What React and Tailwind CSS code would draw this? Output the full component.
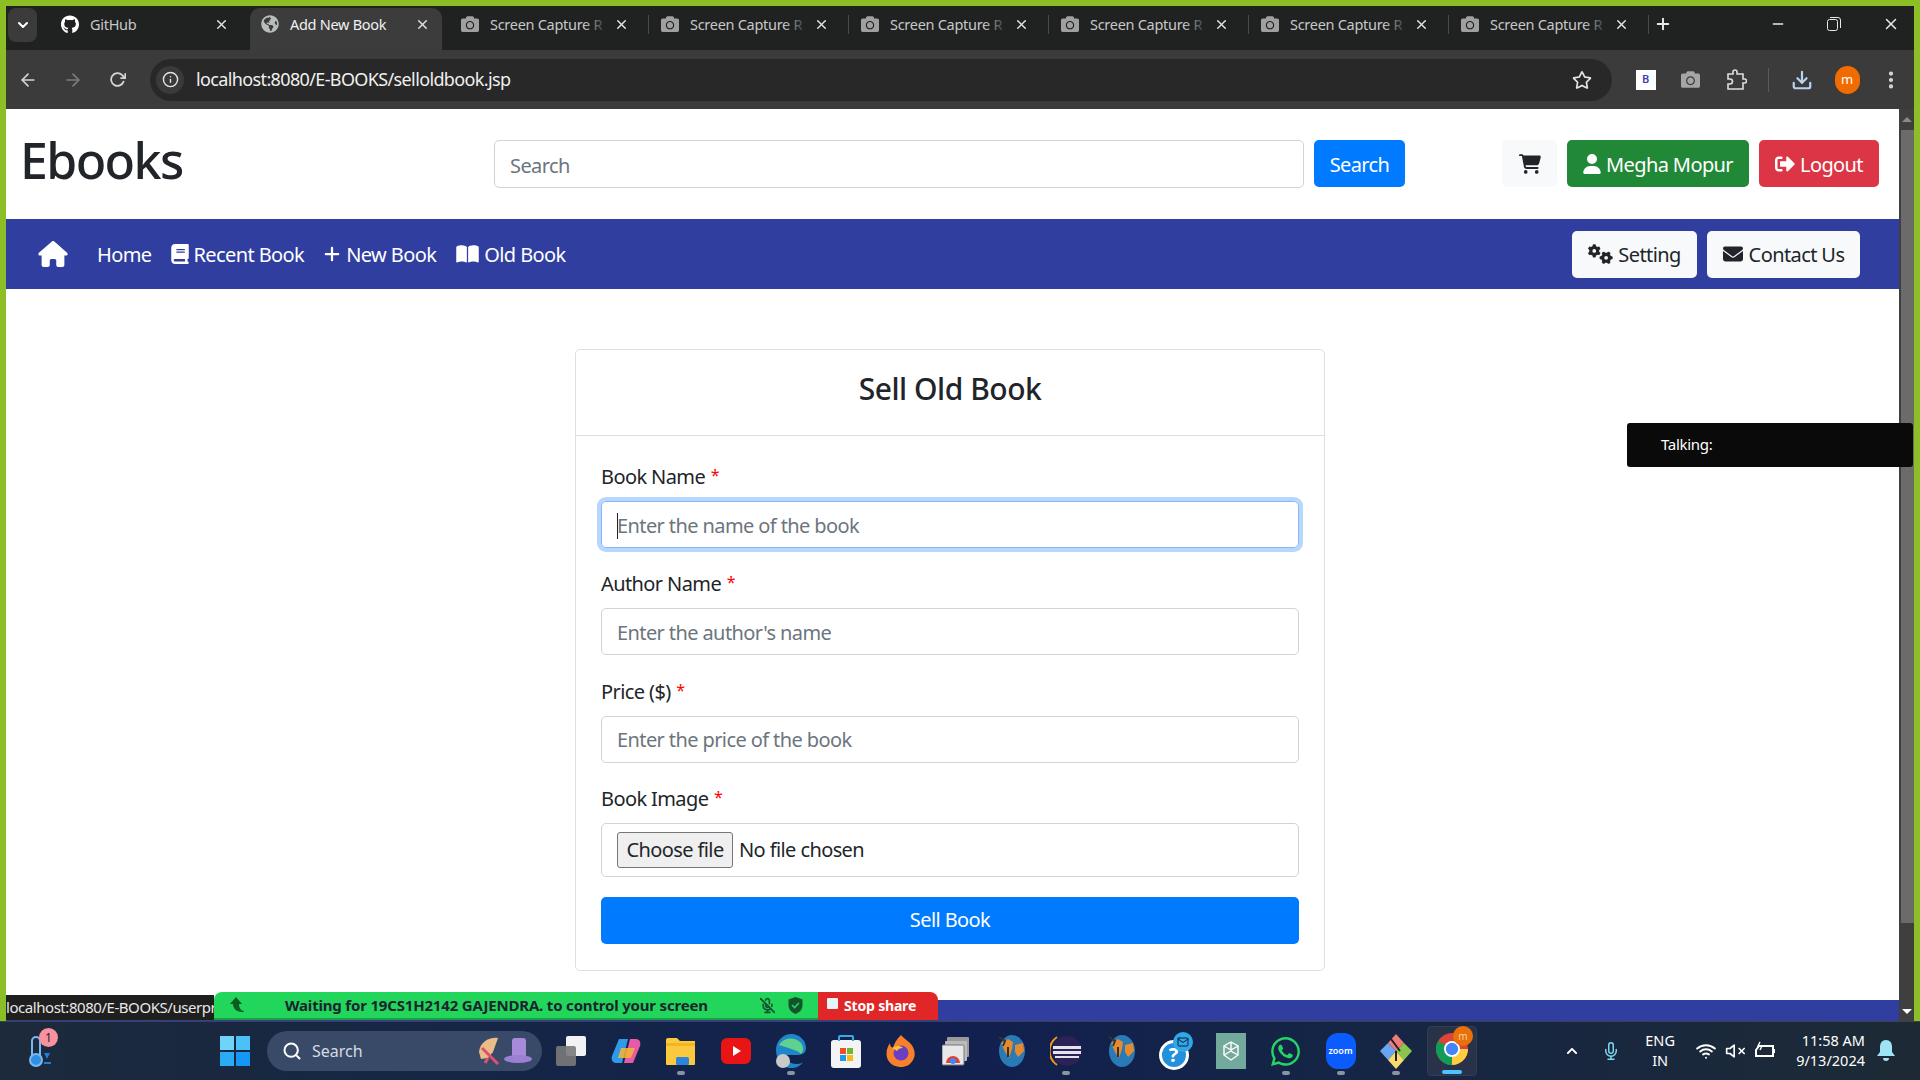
import React from "react";
import { FaSignOutAlt, FaGithub, FaGlobeAmericas, FaCamera, FaRegStar, FaWhatsapp, FaChevronUp } from "react-icons/fa";
import { FaHouse, FaBook, FaPlus, FaBookOpen, FaGears, FaEnvelope, FaCartShopping, FaUser } from "react-icons/fa6";
import { FiArrowLeft, FiArrowRight, FiRotateCw, FiInfo, FiDownload, FiX, FiMinus, FiSearch, FiPlus, FiChevronDown, FiMic, FiMicOff, FiWifi, FiVolumeX, FiMoreVertical, FiMail } from "react-icons/fi";

function Tab({ icon, title, active, sep, fade }) {
  return (
    <div className={active
      ? "relative flex items-center w-[192px] h-[42px] mt-[2px] ml-[1px] mr-[7px] pl-[11px] pr-[12px] pb-[10px] rounded-t-[10px] bg-[#3c3c3c] text-[#f1f1f1]"
      : "relative flex items-center w-[200px] h-[36px] pl-[12px] pr-[20px] text-[#c7c7c7]"}>
      <span className="w-[18px] h-[18px] flex items-center justify-center shrink-0 text-[#b9bcbd]">{icon}</span>
      <span className="relative ml-[11px] flex-1 pt-[1px] text-[14.5px] tracking-[-0.02em] whitespace-nowrap">
        {title}
        {fade && <span className="absolute right-0 top-0 bottom-0 w-[24px] bg-gradient-to-r from-transparent to-[#202221]" />}
      </span>
      <FiX className="ml-[6px] shrink-0 w-[15px] h-[15px] text-[#e0e0e0]" strokeWidth={2.4} />
      {sep && <span className="absolute right-0 top-[9px] h-[19px] w-px bg-[#4a4a4a]" />}
    </div>
  );
}

function Tool({ children, w = "w-[45px]" }) {
  return <div className={`${w} flex items-center justify-center shrink-0`}>{children}</div>;
}

function NavLink({ icon, label, cls }) {
  return (
    <span className={`flex items-center text-white text-[20px] tracking-[-0.03em] ${cls}`}>
      {icon}<span className="pt-[2px]">{label}</span>
    </span>
  );
}

const Star = () => <span className="text-[#ff0000] text-[16px] leading-[0] align-[3px] ml-[1px]">*</span>;

function Field({ label, placeholder, focus, caret }) {
  return (
    <div className="mb-[21.3px]">
      <div className="h-[30px] mb-[9px] text-[20px] leading-[30px] tracking-[-0.03em] text-[#212529]">
        {label} <Star />
      </div>
      <div className={focus
        ? "h-[47px] rounded-[5px] border border-[#86b7fe] shadow-[0_0_0_4px_#b8d7fd] flex items-center pl-[15px] pt-[2px] text-[20px] tracking-[-0.03em] text-[#6c757d]"
        : "h-[47px] rounded-[5px] border border-[#ced4da] flex items-center pl-[15px] pt-[2px] text-[20px] tracking-[-0.03em] text-[#6c757d]"}>
        {caret && <span className="w-px h-[26px] bg-[#212529] -mr-px" />}
        {placeholder}
      </div>
    </div>
  );
}

const Cell = ({ children, dot, cls = "" }) => (
  <div className={`relative w-[55px] h-[59px] flex items-center justify-center shrink-0 ${cls}`}>
    {children}
    {dot && <span className="absolute bottom-[6px] w-[8px] h-[4px] rounded-[2px] bg-[#8b93a3]" />}
  </div>
);

const Globe = () => (
  <svg width="30" height="36" viewBox="0 0 30 36">
    <ellipse cx="16" cy="18" rx="13" ry="16" fill="#2a7ab8" />
    <path d="M5 10l7-4 5 3-1 7-3 9-4-6zM19 12l8-2 1 8-6 6-3-5z" fill="#e58a2e" />
    <path d="M3 4l6 4-2 5M12 14v10" stroke="#333" strokeWidth="2" fill="none" />
  </svg>
);

function ChromeIcon({ size = 30 }) {
  return (
    <svg width={size} height={size} viewBox="0 0 30 30">
      <circle cx="15" cy="15" r="15" fill="#db4437" />
      <path d="M15 15L2 22.5A15 15 0 0 0 15 30z" fill="#0f9d58" />
      <path d="M2 22.5A15 15 0 0 1 2 7.5L15 15z" fill="#0f9d58" />
      <path d="M15 15h15a15 15 0 0 1-15 15z" fill="#ffcd40" />
      <circle cx="15" cy="15" r="7.5" fill="#fff" />
      <circle cx="15" cy="15" r="5.8" fill="#4285f4" />
    </svg>
  );
}

export default function App() {
  return (
    <div className="relative w-[1920px] h-[1080px] overflow-hidden bg-[#8cbf26] font-['Noto_Sans',sans-serif] flex flex-col">
      <div className="flex-1 min-h-0 flex flex-col pt-[6px] pl-[6px] pr-[6px]">
        {/* tab strip */}
        <div className="h-[44px] shrink-0 bg-[#202221] flex items-start">
          <div className="w-[29px] h-[34px] mt-[2px] ml-[2px] mr-[12px] rounded-[8px] bg-[#3b3b3b] flex items-center justify-center text-white shrink-0">
            <FiChevronDown className="w-[16px] h-[16px]" strokeWidth={3} />
          </div>
          <Tab icon={<FaGithub className="w-[21px] h-[21px] text-white" />} title="GitHub" />
          <Tab active icon={<FaGlobeAmericas className="w-[18px] h-[18px]" />} title="Add New Book" />
          {[0, 1, 2, 3, 4, 5].map((i) => (
            <Tab key={i} sep fade icon={<FaCamera className="w-[18px] h-[18px] text-[#a0a0a0]" />} title="Screen Capture R" />
          ))}
          <div className="h-[36px] flex items-center ml-[5px] text-[#e8e8e8]"><FiPlus className="w-[18px] h-[18px]" strokeWidth={2.6} /></div>
          <div className="flex-1" />
          <div className="h-[36px] flex items-center text-[#e8e8e8] gap-[40px] pr-[14px]">
            <FiMinus className="w-[16px] h-[16px]" />
            <svg width="16" height="16" viewBox="0 0 16 16" fill="none" stroke="currentColor"><rect x="1.5" y="3.5" width="10" height="11" rx="2" /><path d="M4 1.5h8a2.5 2.5 0 0 1 2.5 2.5v8" /></svg>
            <FiX className="w-[18px] h-[18px]" />
          </div>
        </div>
        {/* toolbar */}
        <div className="h-[59px] shrink-0 bg-[#3b3b3b] flex items-center">
          <div className="flex -ml-[1px]">
            <Tool><FiArrowLeft className="w-[20px] h-[20px] text-[#d5d5d5]" /></Tool>
            <Tool><FiArrowRight className="w-[20px] h-[20px] text-[#7d7d7d]" /></Tool>
            <Tool><FiRotateCw className="w-[17px] h-[17px] text-[#d5d5d5]" strokeWidth={2.5} /></Tool>
          </div>
          <div className="w-[1462px] h-[42px] ml-[10px] rounded-full bg-[#282828] flex items-center pl-[6px] pr-[20px] shrink-0">
            <span className="w-[28px] h-[28px] rounded-full bg-[#3a3a3a] flex items-center justify-center text-[#e4e4e4]"><FiInfo className="w-[17px] h-[17px]" /></span>
            <span className="ml-[12px] flex-1 text-[18px] tracking-[-0.035em] text-[#f0f0f0]">localhost:8080/E-BOOKS/selloldbook.jsp</span>
            <FaRegStar className="w-[20px] h-[20px] text-[#e4e4e4]" />
          </div>
          <div className="w-[11px]" />
          <Tool><span className="w-[20px] h-[20px] bg-white text-[#3a3fb0] text-[11px] font-semibold flex items-center justify-center">B</span></Tool>
          <Tool><FaCamera className="w-[19px] h-[19px] text-[#a5a5a5]" /></Tool>
          <Tool>
            <svg width="22" height="22" viewBox="0 0 22 22" fill="none" stroke="#dedede" strokeWidth="1.6"><path d="M3 5h5V3a2 2 0 0 1 4 0v2h6v5h1.5a2 2 0 0 1 0 4H18v6H3v-5h2a2.5 2.5 0 0 0 0-5H3z" /></svg>
          </Tool>
          <span className="w-px h-[24px] bg-[#5a5a5a] ml-[10px] mr-[11px]" />
          <Tool w="w-[44px]"><FiDownload className="w-[22px] h-[22px] text-[#b7d3f3]" strokeWidth={2.4} /></Tool>
          <Tool w="w-[46px]"><span className="w-[25px] h-[28px] rounded-full bg-[#f06b00] text-white text-[13px] flex items-center justify-center">m</span></Tool>
          <Tool w="w-[42px]"><FiMoreVertical className="w-[22px] h-[22px] text-[#d8d8d8]" strokeWidth={2.6} /></Tool>
        </div>

        {/* page + scrollbar */}
        <div className="flex-1 min-h-0 flex">
          <div className="flex-1 min-w-0 bg-white flex flex-col">
            <header className="h-[110px] shrink-0 flex items-center pb-[1px] pl-[14px]">
              <div className="w-[474px] text-[50px] font-medium leading-[60px] tracking-[-0.032em] text-[#212529] -mt-[8px]">Ebooks</div>
              <div className="w-[810px] h-[48px] rounded-[5px] border border-[#ced4da] flex items-center pl-[15px] pt-[5px] text-[20px] tracking-[-0.03em] text-[#6c757d]">Search</div>
              <div className="w-[91px] h-[47px] ml-[10px] pt-[2px] rounded-[5px] bg-[#007bff] text-white text-[20px] tracking-[-0.03em] flex items-center justify-center">Search</div>
              <div className="w-[55px] h-[47px] ml-[97px] rounded-[5px] bg-[#f8f9fa] flex items-center justify-center text-[#212529]"><FaCartShopping className="w-[22px] h-[20px]" /></div>
              <div className="w-[182px] h-[47px] ml-[10px] rounded-[5px] bg-[#218838] text-white text-[20px] tracking-[-0.03em] flex items-center justify-center gap-[5px]"><FaUser className="w-[18px] h-[20px]" /><span className="pt-[2px]">Megha Mopur</span></div>
              <div className="w-[120px] h-[47px] ml-[10px] rounded-[5px] bg-[#dc3545] text-white text-[20px] tracking-[-0.03em] flex items-center justify-center gap-[5px]"><FaSignOutAlt className="w-[20px] h-[20px]" /><span className="pt-[2px]">Logout</span></div>
            </header>
            <nav className="h-[70px] shrink-0 bg-[#303f9f] flex items-center pl-[32px] pr-[39px]">
              <FaHouse className="w-[30px] h-[26px] text-white" />
              <NavLink cls="ml-[29px]" label="Home" />
              <NavLink cls="ml-[19px]" icon={<FaBook className="w-[18px] h-[20px] mr-[5px]" />} label="Recent Book" />
              <NavLink cls="ml-[19px]" icon={<FaPlus className="w-[18px] h-[18px] mr-[5px]" />} label="New Book" />
              <NavLink cls="ml-[20px]" icon={<FaBookOpen className="w-[23px] h-[20px] mr-[5px]" />} label="Old Book" />
              <div className="flex-1" />
              <div className="w-[125px] h-[47px] rounded-[5px] bg-[#f8f9fa] text-[#212529] text-[20px] tracking-[-0.03em] flex items-center justify-center gap-[5px]"><FaGears className="w-[25px] h-[20px]" /><span className="pt-[2px]">Setting</span></div>
              <div className="w-[153px] h-[47px] ml-[10px] rounded-[5px] bg-[#f8f9fa] text-[#212529] text-[20px] tracking-[-0.03em] flex items-center justify-center gap-[6px]"><FaEnvelope className="w-[20px] h-[20px]" /><span className="pt-[2px]">Contact Us</span></div>
            </nav>
            <main className="flex-1 min-h-0 flex justify-center pt-[60px] pr-[5px]">
              <div className="w-[750px] h-[622px] rounded-[5px] border border-[#dfdfdf] flex flex-col">
                <div className="h-[86px] shrink-0 border-b border-[#dfdfdf] flex items-center justify-center pb-[8px] text-[30px] font-medium tracking-[-0.016em] text-[#212529]">Sell Old Book</div>
                <div className="px-[25px] pt-[26px]">
                  <Field label="Book Name" placeholder="Enter the name of the book" focus caret />
                  <Field label="Author Name" placeholder="Enter the author's name" />
                  <Field label="Price ($)" placeholder="Enter the price of the book" />
                  <div className="h-[30px] mb-[9px] text-[20px] leading-[30px] tracking-[-0.03em] text-[#212529]">Book Image <Star /></div>
                  <div className="h-[54px] rounded-[5px] border border-[#ced4da] flex items-center pl-[15px] text-[20px] tracking-[-0.03em] text-[#212529]">
                    <span className="w-[116px] h-[36px] rounded-[3px] border border-[#767676] bg-[#efefef] flex items-center justify-center">Choose file</span>
                    <span className="ml-[6px]">No file chosen</span>
                  </div>
                  <div className="h-[47px] mt-[20px] rounded-[5px] bg-[#007bff] text-white text-[20px] tracking-[-0.03em] flex items-center justify-center">Sell Book</div>
                </div>
              </div>
            </main>
            <div className="h-[21px] shrink-0 bg-[#303f9f]" />
          </div>
          {/* scrollbar */}
          <div className="w-[15px] shrink-0 bg-[#3f3f3f] flex flex-col">
            <div className="h-[21px] flex items-center justify-center"><span className="border-x-[5px] border-x-transparent border-b-[5px] border-b-[#8a8a8a]" /></div>
            <div className="h-[793px] ml-[2px] bg-[#6b6b6b]" />
            <div className="flex-1" />
            <div className="h-[20px] flex items-center justify-center"><span className="border-x-[5px] border-x-transparent border-t-[5px] border-t-white" /></div>
          </div>
        </div>
      </div>

      {/* taskbar */}
      <div className="h-[59px] shrink-0 border-t border-[#3a424c] bg-gradient-to-r from-[#1c2a3b] via-[#11204f] via-50% to-[#1d2a35] flex items-center">
        <div className="w-[207px] pl-[27px] shrink-0">
          <div className="relative w-[28px] h-[36px]">
            <svg width="26" height="36" viewBox="0 0 26 36" fill="none"><rect x="5" y="4" width="8" height="22" rx="4" stroke="#7ab9f0" strokeWidth="2" /><circle cx="9" cy="27" r="6" fill="#2f8fe6" stroke="#7ab9f0" strokeWidth="2" /><path d="M17 20h6l-3 6zM17 29h7v2h-7z" fill="#1f7fd8" /></svg>
            <span className="absolute -top-[5px] left-[12px] w-[19px] h-[19px] rounded-full bg-[#f9929f] text-[#20242c] text-[12px] flex items-center justify-center">1</span>
          </div>
        </div>
        <Cell>
          <div className="grid grid-cols-2 gap-[2px]">
            <span className="w-[14px] h-[14px] bg-[#6fd4f7]" /><span className="w-[14px] h-[14px] bg-[#4ac2f5]" />
            <span className="w-[14px] h-[14px] bg-[#29abf5]" /><span className="w-[14px] h-[14px] bg-[#1598f5]" />
          </div>
        </Cell>
        <div className="w-[275px] h-[40px] ml-[5px] mr-[1px] shrink-0 rounded-full bg-[#394a68] flex items-center pl-[15px] pr-[8px] text-[#d6dae2] text-[16px]">
          <FiSearch className="w-[20px] h-[20px] text-white" strokeWidth={2.4} />
          <span className="ml-[10px] flex-1">Search</span>
          <svg width="58" height="34" viewBox="0 0 58 34">
            <path d="M3 18C4 8 13 3 22 4l-5 14-5 6-7 1z" fill="#e8bd8a" /><path d="M6 14l16 16M12 24l-3 5" stroke="#e0506e" strokeWidth="3" />
            <rect x="36" y="4" width="14" height="20" rx="3" fill="#a78bd8" /><ellipse cx="42" cy="25" rx="14" ry="4" fill="#9b7fd0" />
          </svg>
        </div>
        <Cell>
          <span className="relative w-[30px] h-[30px]">
            <span className="absolute right-0 top-0 w-[20px] h-[20px] rounded-[2px] bg-[#f2f2f2]" />
            <span className="absolute left-0 bottom-0 w-[20px] h-[20px] rounded-[2px] bg-[#7a7a7a]/90" />
          </span>
        </Cell>
        <Cell>
          <svg width="30" height="30" viewBox="0 0 30 30"><path d="M8 3h9l-6 24H5C1 27 0 23 1 20z" fill="#2f9be8" /><path d="M22 27h-9l6-24h6c4 0 5 4 4 7z" fill="#e85aa8" /><path d="M10 12h14l-4 10H7z" fill="#f7b733" opacity=".85" /></svg>
        </Cell>
        <Cell dot>
          <svg width="32" height="30" viewBox="0 0 32 30"><path d="M1 4a2 2 0 0 1 2-2h9l3 3h15v23a1 1 0 0 1-1 1H2a1 1 0 0 1-1-1z" fill="#fbc93d" /><path d="M1 7h29v3H1z" fill="#f5b324" /><rect x="11" y="21" width="13" height="8" rx="1.5" fill="#2a86d8" /></svg>
        </Cell>
        <Cell>
          <svg width="30" height="26" viewBox="0 0 30 26"><rect width="30" height="26" rx="6" fill="#e81416" /><path d="M12 8l8 5-8 5z" fill="#fff" /></svg>
        </Cell>
        <Cell dot>
          <svg width="32" height="36" viewBox="0 0 32 36"><path d="M1 17C1 8 8 1 16 1c9 0 15 7 15 14 0 5-4 7-9 7H10c0 6 6 9 12 9 3 0 5-1 6-2-3 5-8 6-12 6C8 35 1 27 1 17z" fill="#1f87c9" /><path d="M4 12C8 5 18 3 25 9c4 4 4 9 1 12-3-4-14-6-22-9z" fill="#5fd38d" /><circle cx="8" cy="28" r="7" fill="#c9c9c9" /></svg>
        </Cell>
        <Cell>
          <svg width="30" height="34" viewBox="0 0 30 34"><rect y="6" width="30" height="28" rx="3" fill="#f4f4f4" /><path d="M8 7V3a1 1 0 0 1 1-1h12a1 1 0 0 1 1 1v4" fill="none" stroke="#38a8e8" strokeWidth="2" /><rect x="9" y="14" width="6" height="6" fill="#e8512a" /><rect x="16" y="14" width="6" height="6" fill="#70b82f" /><rect x="9" y="21" width="6" height="6" fill="#1e9be8" /><rect x="16" y="21" width="6" height="6" fill="#fbb913" /></svg>
        </Cell>
        <Cell>
          <svg width="30" height="34" viewBox="0 0 30 34"><path d="M15 1c2 3 6 5 9 8 5 5 6 12 3 17-3 5-7 7-12 7S5 31 2 26C-1 20 1 13 4 9c0 3 1 4 3 5 1-5 4-9 8-13z" fill="#f9802a" /><circle cx="15" cy="19" r="7.5" fill="#6a3fc4" /><path d="M6 14c3-2 8-3 11 0-3 0-5 1-6 3z" fill="#fbbf3a" /></svg>
        </Cell>
        <Cell>
          <svg width="28" height="30" viewBox="0 0 28 30"><rect x="5" y="1" width="22" height="20" rx="1" fill="#9a9a9a" /><rect x="3" y="5" width="22" height="20" rx="1" fill="#bbb" /><rect x="0" y="9" width="22" height="20" rx="1" fill="#e8e8e8" stroke="#777" /><path d="M4 27a7 7 0 0 1 14 0z" fill="#db4437" /><circle cx="11" cy="25" r="3" fill="#4285f4" /></svg>
        </Cell>
        <Cell><Globe /></Cell>
        <Cell dot>
          <svg width="32" height="36" viewBox="0 0 32 36"><circle cx="17" cy="18" r="15" fill="#2c2255" /><path d="M7 4A17 17 0 0 0 7 32" fill="none" stroke="#f7941e" strokeWidth="2" /><path d="M3 13h28v3H3zM3 18h28v3H3zM5 23h24v2H5z" fill="#e4e4ef" /></svg>
        </Cell>
        <Cell><Globe /></Cell>
        <Cell>
          <span className="relative w-[34px] h-[38px] flex items-end">
            <span className="w-[30px] h-[30px] rounded-full bg-[#2390de] border-[3px] border-white text-white text-[20px] font-bold flex items-center justify-center leading-none">?</span>
            <span className="absolute right-0 top-0 w-[20px] h-[20px] rounded-full bg-[#2ea8e8] flex items-center justify-center"><FiMail className="w-[12px] h-[12px] text-[#10203c]" /></span>
          </span>
        </Cell>
        <Cell>
          <span className="w-[30px] h-[36px] bg-[#74aa9c] flex items-center justify-center">
            <svg width="22" height="22" viewBox="0 0 22 22" fill="none" stroke="#fff" strokeWidth="1.4"><path d="M11 2l7 4v9l-7 5-7-5V6z" /><path d="M11 2v9l7 4M11 11l-7 4M4 6l7 4 7-4" /></svg>
          </span>
        </Cell>
        <Cell dot><FaWhatsapp className="w-[33px] h-[33px] text-[#25d366]" /></Cell>
        <Cell dot>
          <span className="w-[30px] h-[36px] rounded-[12px] bg-[#0b5cff] text-white text-[9px] font-semibold flex items-center justify-center">zoom</span>
        </Cell>
        <Cell dot>
          <svg width="32" height="36" viewBox="0 0 32 36"><path d="M16 1l8 9-8 8-8-8z" fill="#ee7a7a" /><path d="M24 10l8 8-8 9-8-9z" fill="#8ac64e" /><path d="M8 10l8 8-8 9-8-9z" fill="#6ba5f2" /><path d="M16 18l8 9-8 9-8-9z" fill="#f6dc6c" /><path d="M11 6l9 12M16 18v10" stroke="#222" strokeWidth="2" /></svg>
        </Cell>
        <div className="relative w-[50px] h-[50px] ml-[4px] shrink-0 rounded-[4px] bg-[#28334a] border border-[#333e52] flex items-center justify-center">
          <span className="relative block w-[32px] h-[32px] -mt-[4px]"><ChromeIcon size={32} />
            <span className="absolute -top-[7px] -right-[5px] w-[20px] h-[20px] rounded-full bg-[#e8710a] text-[#f9cfa0] text-[10px] flex items-center justify-center">m</span>
          </span>
          <span className="absolute bottom-[1px] w-[20px] h-[4px] rounded-[2px] bg-[#4cc2ff]" />
        </div>
        <div className="flex-1" />
        <FaChevronUp className="w-[14px] h-[12px] text-white" />
        <FiMic className="ml-[23px] w-[18px] h-[26px] text-[#7fd4ef]" />
        <div className="ml-[22px] w-[36px] pb-[2px] text-[14.5px] leading-[20px] text-center text-white">ENG<br />IN</div>
        <FiWifi className="ml-[18px] w-[20px] h-[20px] text-white" strokeWidth={2.4} />
        <FiVolumeX className="ml-[9px] w-[20px] h-[20px] text-white" />
        <svg className="ml-[9px]" width="22" height="20" viewBox="0 0 22 20" fill="none" stroke="#fff" strokeWidth="2"><path d="M5 5h14v10H2V9zM20 8v4" /><path d="M6 1l-2 4h4l-2 4" strokeWidth="1.4" /></svg>
        <div className="ml-[20px] pb-[3px] text-[14.5px] leading-[20px] text-right text-white">11:58 AM<br />9/13/2024</div>
        <svg className="ml-[12px] mr-[25px]" width="18" height="22" viewBox="0 0 18 22" fill="#9fe4f5"><path d="M9 0c4 0 6 3 6 7v5l3 4H0l3-4V7c0-4 2-7 6-7zM6 18h6a3 3 0 0 1-6 0z" /></svg>
      </div>

      {/* overlays */}
      <div className="absolute left-[1627px] top-[423px] w-[286px] h-[44px] rounded-[3px] bg-[#0a0a0a] flex items-center pl-[34px] pb-[2px] text-white text-[15px] tracking-[-0.02em]">Talking:</div>
      <div className="absolute left-[6px] top-[995px] w-[208px] h-[25px] bg-[#1f1f1f] text-[#e8e8e8] text-[15px] tracking-[-0.03em] leading-[25px] whitespace-nowrap">localhost:8080/E-BOOKS/userpr</div>
      <div className="absolute left-[214px] top-[992px] h-[28px] flex font-bold text-[15px] tracking-[-0.012em]">
        <div className="w-[604px] rounded-tl-[8px] bg-[#22d65c] border-b-2 border-[#1a9c48] flex items-center pl-[15px] text-[#1c2430]">
          <svg width="16" height="16" viewBox="0 0 16 16" fill="#0d5c22"><path d="M7 0L1 7h3c0 4 3 8 9 8 1 0 2 0 2-1-3 0-5-3-5-7h3z" /></svg>
          <span className="ml-[40px] flex-1 whitespace-nowrap">Waiting for 19CS1H2142 GAJENDRA. to control your screen</span>
          <span className="mr-[15px] flex items-center gap-[13px] text-[#14532d]">
            <FiMicOff className="w-[15px] h-[17px]" strokeWidth={2.6} />
            <svg width="15" height="17" viewBox="0 0 15 17"><path d="M7.5 0l7 2.5V8c0 4.5-3 7.5-7 9-4-1.5-7-4.5-7-9V2.5z" fill="#14532d" /><path d="M4 8l2.5 2.5L11 6" stroke="#22d65c" strokeWidth="1.6" fill="none" /></svg>
          </span>
        </div>
        <div className="w-[120px] rounded-tr-[8px] bg-[#e02626] text-white text-[14px] flex items-center pl-[9px] pb-[2px]">
          <span className="w-[11px] h-[11px] rounded-[1px] bg-[#e4f4f6] mr-[6px] mb-[3px]" />Stop share
        </div>
      </div>
    </div>
  );
}
